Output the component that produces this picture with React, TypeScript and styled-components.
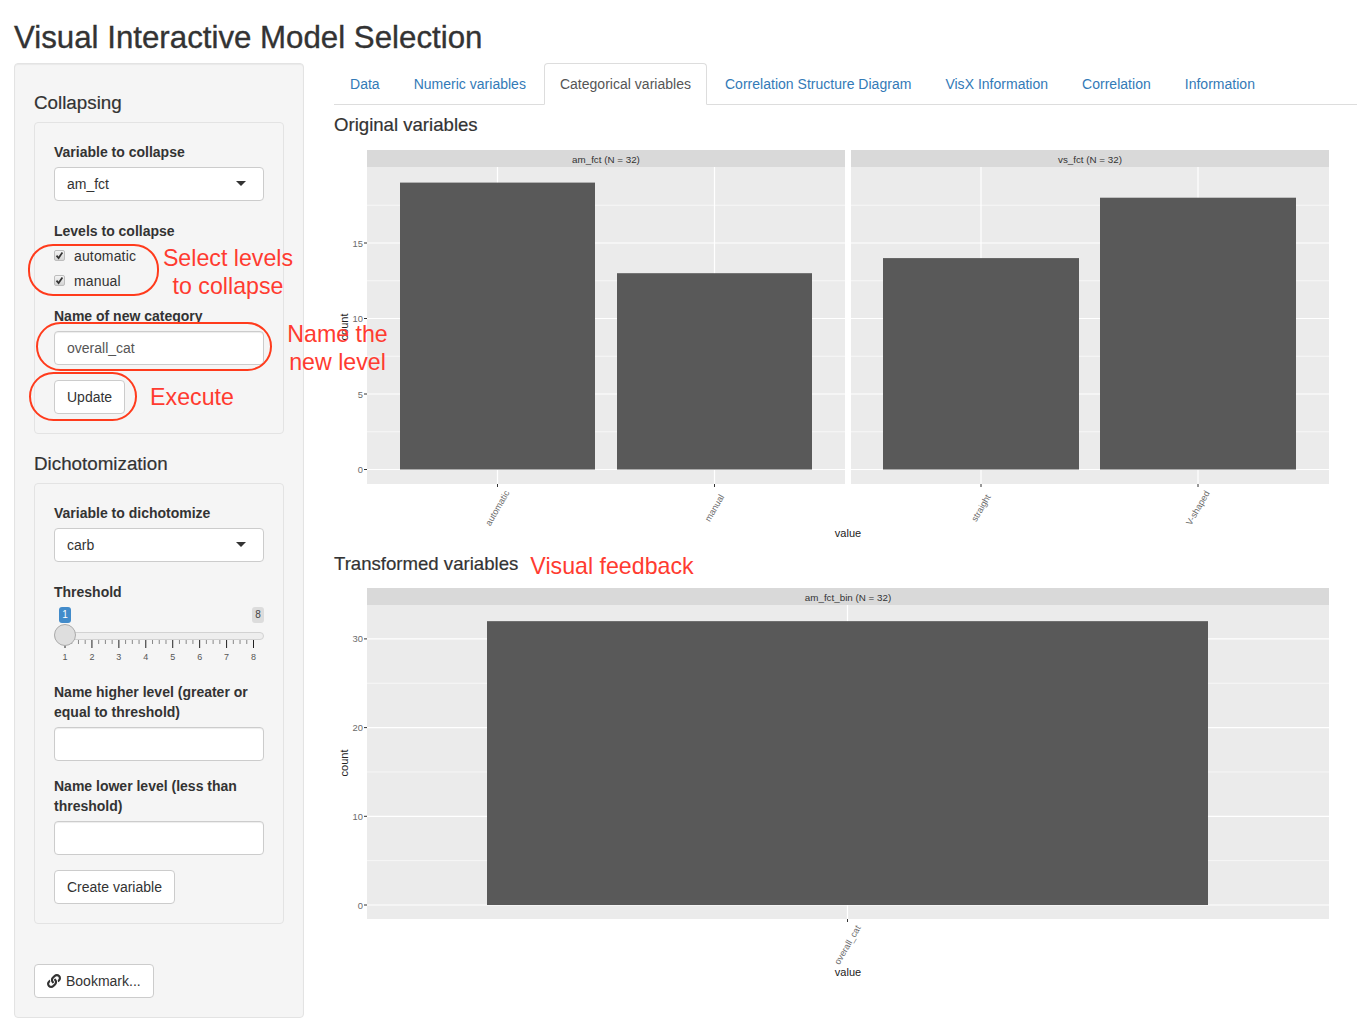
import styled, { createGlobalStyle } from "styled-components";
import { FaLink } from "react-icons/fa";

const GlobalStyle = createGlobalStyle`
  html, body {
    margin: 0;
    padding: 0;
    background: #fff;
  }
  body {
    font-family: "Liberation Sans", Arial, sans-serif;
    font-size: 14px;
    line-height: 20px;
    color: #333;
  }
  * {
    box-sizing: border-box;
  }
`;

const Page = styled.div`
  position: relative;
  height: 1019px;
  padding-left: 14px;
  overflow: hidden;
`;

const Title = styled.h2`
  margin: 21px 0 9px;
  font-size: 31.25px;
  font-weight: 500;
  line-height: 33px;
  -webkit-text-stroke: 0.35px #333;
`;

const Columns = styled.div`
  display: grid;
  grid-template-columns: 290px 1023px;
  column-gap: 30px;
`;

const Sidebar = styled.aside`
  height: 955px;
  padding: 19px;
  background: #f5f5f5;
  border: 1px solid #e3e3e3;
  border-radius: 4px;
  box-shadow: inset 0 1px 1px rgba(0, 0, 0, 0.05);
`;

const SectionTitle = styled.h3`
  margin: 10px 0 9px;
  font-size: 18.8px;
  font-weight: 500;
  line-height: 20px;
  -webkit-text-stroke: 0.2px #333;
`;

const Well = styled.div`
  margin-bottom: 20px;
  padding: 19px;
  background: #f5f5f5;
  border: 1px solid #e3e3e3;
  border-radius: 4px;
`;

const FormGroup = styled.div<{ $gap?: number; $top?: number }>`
  margin-bottom: ${(p) => p.$gap ?? 15}px;
  padding-top: ${(p) => p.$top ?? 0}px;
`;

const Label = styled.label<{ $flush?: boolean }>`
  display: block;
  margin-bottom: ${(p) => (p.$flush ? 2 : 5)}px;
  font-weight: 700;
`;

const SelectBox = styled.div`
  position: relative;
  height: 34px;
  padding: 6px 12px;
  background: #fff;
  border: 1px solid #ccc;
  border-radius: 4px;
  &::after {
    content: "";
    position: absolute;
    top: 13px;
    right: 17px;
    border-style: solid;
    border-width: 5px 5px 0;
    border-color: #333 transparent transparent;
  }
`;

const TextInput = styled.input`
  display: block;
  width: 100%;
  height: 34px;
  padding: 6px 12px;
  font: inherit;
  color: #555;
  background: #fff;
  border: 1px solid #ccc;
  border-radius: 4px;
  box-shadow: inset 0 1px 1px rgba(0, 0, 0, 0.075);
`;

const Button = styled.button`
  display: inline-flex;
  align-items: center;
  gap: 5px;
  height: 34px;
  padding: 6px 12px;
  font: inherit;
  color: #333;
  background: #fff;
  border: 1px solid #ccc;
  border-radius: 4px;
`;

const CheckRow = styled.div`
  display: flex;
  align-items: center;
  gap: 9px;
  height: 25px;
  letter-spacing: 0.15px;
`;

const CheckBox = styled.span`
  display: flex;
  align-items: center;
  justify-content: center;
  width: 11px;
  height: 11px;
  background: linear-gradient(#f4f4f4, #d4d4d4);
  border: 1px solid #bdbdbd;
  border-radius: 2px;
`;

const CheckMark = () => (
  <svg width="9" height="9" viewBox="0 0 9 9">
    <path d="M1.5 4.6 L3.6 7 L7.4 1.4" fill="none" stroke="#333" strokeWidth="1.7" />
  </svg>
);

const SliderWrap = styled.div`
  position: relative;
  height: 60px;
`;

const SliderBadge = styled.span<{ $active?: boolean }>`
  position: absolute;
  top: 0;
  ${(p) => (p.$active ? "left: 5px;" : "right: 0;")}
  width: 12px;
  height: 16px;
  font-size: 10px;
  line-height: 16px;
  text-align: center;
  color: ${(p) => (p.$active ? "#fff" : "#444")};
  background: ${(p) => (p.$active ? "#428bca" : "#dcdcdc")};
  border-radius: 3px;
`;

const SliderTrack = styled.div`
  position: absolute;
  top: 25px;
  left: 0;
  right: 0;
  height: 8px;
  background: #eee;
  border: 1px solid #d2d2d2;
  border-radius: 4px;
`;

const SliderHandle = styled.div`
  position: absolute;
  top: 17px;
  left: 0;
  width: 22px;
  height: 22px;
  background: #dedede;
  border: 1px solid #ababab;
  border-radius: 50%;
`;

const SliderScale = styled.svg`
  position: absolute;
  top: 33px;
  left: 0;
`;

const sliderX = (v: number) => 11 + (v - 1) * 26.93;

const Slider = () => {
  const major = [1, 2, 3, 4, 5, 6, 7, 8];
  const minor: number[] = [];
  major.slice(0, 7).forEach((v) => {
    [0.25, 0.5, 0.75].forEach((f) => minor.push(v + f));
  });
  return (
    <SliderWrap>
      <SliderBadge $active>1</SliderBadge>
      <SliderBadge>8</SliderBadge>
      <SliderTrack />
      <SliderScale width="210" height="27" viewBox="0 0 210 27">
        {minor.map((v) => (
          <line key={v} x1={sliderX(v)} x2={sliderX(v)} y1="0" y2="4" stroke="#888" />
        ))}
        {major.map((v) => (
          <g key={v}>
            <line x1={sliderX(v)} x2={sliderX(v)} y1="0" y2="8" stroke="#222" />
            <text x={sliderX(v)} y="20" fontSize="9" textAnchor="middle" fill="#555">
              {v}
            </text>
          </g>
        ))}
      </SliderScale>
      <SliderHandle />
    </SliderWrap>
  );
};

const Main = styled.main`
  min-width: 0;
`;

const TabList = styled.ul`
  display: flex;
  height: 42px;
  margin: 0;
  padding: 0;
  list-style: none;
  border-bottom: 1px solid #ddd;
`;

const Tab = styled.li<{ $active?: boolean }>`
  height: 42px;
  margin-right: 2px;
  padding: 10px 15px;
  border: 1px solid ${(p) => (p.$active ? "#ddd" : "transparent")};
  border-bottom-color: ${(p) => (p.$active ? "#fff" : "transparent")};
  border-radius: 4px 4px 0 0;
  color: ${(p) => (p.$active ? "#555" : "#337ab7")};
  background: ${(p) => (p.$active ? "#fff" : "transparent")};
  letter-spacing: 0.015px;
  white-space: nowrap;
`;

const PlotTitle = styled.h4<{ $top: number }>`
  margin: ${(p) => p.$top}px 0 6px;
  font-size: 18.6px;
  font-weight: 500;
  line-height: 20px;
  -webkit-text-stroke: 0.2px #333;
`;

const PlotSvg = styled.svg`
  display: block;
`;

const Ring = styled.div<{ $x: number; $y: number; $w: number; $h: number }>`
  position: absolute;
  left: ${(p) => p.$x}px;
  top: ${(p) => p.$y}px;
  width: ${(p) => p.$w}px;
  height: ${(p) => p.$h}px;
  border: 2px solid #ff3b1c;
  border-radius: 25px;
  pointer-events: none;
`;

const Note = styled.div<{ $x: number; $y: number; $w: number }>`
  position: absolute;
  left: ${(p) => p.$x}px;
  top: ${(p) => p.$y}px;
  width: ${(p) => p.$w}px;
  font-size: 23.2px;
  line-height: 28px;
  text-align: center;
  color: #ff3b30;
  white-space: nowrap;
`;

type PanelProps = {
  x: number;
  w: number;
  top: number;
  bottom: number;
  title: string;
  zero: number;
  unit: number;
  breaks: number[];
  showAxis: boolean;
  bars: { label: string; x0: number; x1: number; n: number }[];
  labelY: number;
};

const Panel = ({ x, w, top, bottom, title, zero, unit, breaks, showAxis, bars, labelY }: PanelProps) => {
  const stripBottom = top + 17;
  const step = breaks[1] - breaks[0];
  // half-step grid lines, dropped if they would land on the strip
  const minors = breaks.map((b) => b + step / 2).filter((b) => zero - b * unit > stripBottom);
  return (
    <g>
      <rect x={x} y={top} width={w} height="17" fill="#d9d9d9" />
      <rect x={x} y={stripBottom} width={w} height={bottom - stripBottom} fill="#ebebeb" />
      <text x={x + w / 2} y={top + 13} fontSize="9.8" textAnchor="middle" fill="#333">
        {title}
      </text>
      {minors.map((b) => (
        <line key={b} x1={x} x2={x + w} y1={zero - b * unit} y2={zero - b * unit} stroke="#fff" strokeWidth="0.6" />
      ))}
      {breaks.map((b) => (
        <line key={b} x1={x} x2={x + w} y1={zero - b * unit} y2={zero - b * unit} stroke="#fff" strokeWidth="1.2" />
      ))}
      {bars.map((b) => {
        const c = (b.x0 + b.x1) / 2;
        return (
          <g key={b.label}>
            <line x1={c} x2={c} y1={stripBottom} y2={bottom} stroke="#fff" strokeWidth="1.2" />
            <rect x={b.x0} y={zero - b.n * unit} width={b.x1 - b.x0} height={b.n * unit} fill="#595959" />
            <line x1={c} x2={c} y1={bottom} y2={bottom + 3} stroke="#333" />
            <text
              x={c}
              y={labelY}
              fontSize="9"
              textAnchor="middle"
              fill="#6a6a6a"
              transform={`rotate(-60 ${c} ${labelY - 3})`}
            >
              {b.label}
            </text>
          </g>
        );
      })}
      {showAxis &&
        breaks.map((b) => (
          <g key={b}>
            <line x1={x - 3} x2={x} y1={zero - b * unit} y2={zero - b * unit} stroke="#333" />
            <text x={x - 4} y={zero - b * unit + 3.5} fontSize="9.4" textAnchor="end" fill="#6a6a6a">
              {b}
            </text>
          </g>
        ))}
    </g>
  );
};

const AxisTitles = ({ countY, valueY }: { countY: number; valueY: number }) => (
  <>
    <text
      x="344"
      y={countY}
      fontSize="11"
      textAnchor="middle"
      fill="#222"
      transform={`rotate(-90 348 ${countY})`}
    >
      count
    </text>
    <text x="848" y={valueY} fontSize="11" textAnchor="middle" fill="#222">
      value
    </text>
  </>
);

const tabs = [
  "Data",
  "Numeric variables",
  "Categorical variables",
  "Correlation Structure Diagram",
  "VisX Information",
  "Correlation",
  "Information",
];

export default function App() {
  return (
    <Page>
      <GlobalStyle />
      <Title>Visual Interactive Model Selection</Title>
      <Columns>
        <Sidebar>
          <SectionTitle>Collapsing</SectionTitle>
          <Well>
            <FormGroup $gap={20}>
              <Label>Variable to collapse</Label>
              <SelectBox>am_fct</SelectBox>
            </FormGroup>
            <FormGroup $gap={13}>
              <Label $flush>Levels to collapse</Label>
              <CheckRow>
                <CheckBox>
                  <CheckMark />
                </CheckBox>
                automatic
              </CheckRow>
              <CheckRow>
                <CheckBox>
                  <CheckMark />
                </CheckBox>
                manual
              </CheckRow>
            </FormGroup>
            <FormGroup>
              <Label>Name of new category</Label>
              <TextInput defaultValue="overall_cat" />
            </FormGroup>
            <Button>Update</Button>
          </Well>

          <SectionTitle>Dichotomization</SectionTitle>
          <Well>
            <FormGroup $gap={20}>
              <Label>Variable to dichotomize</Label>
              <SelectBox>carb</SelectBox>
            </FormGroup>
            <FormGroup>
              <Label>Threshold</Label>
              <Slider />
            </FormGroup>
            <FormGroup>
              <Label>Name higher level (greater or equal to threshold)</Label>
              <TextInput />
            </FormGroup>
            <FormGroup>
              <Label>Name lower level (less than threshold)</Label>
              <TextInput />
            </FormGroup>
            <Button>Create variable</Button>
          </Well>

          <FormGroup $gap={0} $top={20}>
            <Button>
              <FaLink size={14} />
              Bookmark...
            </Button>
          </FormGroup>
        </Sidebar>

        <Main>
          <TabList>
            {tabs.map((t) => (
              <Tab key={t} $active={t === "Categorical variables"}>
                {t}
              </Tab>
            ))}
          </TabList>

          <PlotTitle $top={10}>Original variables</PlotTitle>
          <PlotSvg width="1023" height="402" viewBox="334 141 1023 402">
            <Panel
              x={367}
              w={478}
              top={150}
              bottom={484}
              title="am_fct (N = 32)"
              zero={469.5}
              unit={15.1}
              breaks={[0, 5, 10, 15]}
              showAxis
              labelY={511}
              bars={[
                { label: "automatic", x0: 400, x1: 595, n: 19 },
                { label: "manual", x0: 617, x1: 812, n: 13 },
              ]}
            />
            <Panel
              x={851}
              w={478}
              top={150}
              bottom={484}
              title="vs_fct (N = 32)"
              zero={469.5}
              unit={15.1}
              breaks={[0, 5, 10, 15]}
              showAxis={false}
              labelY={511}
              bars={[
                { label: "straight", x0: 883, x1: 1079, n: 14 },
                { label: "V-shaped", x0: 1100, x1: 1296, n: 18 },
              ]}
            />
            <AxisTitles countY={323} valueY={537} />
          </PlotSvg>

          <PlotTitle $top={11}>Transformed variables</PlotTitle>
          <PlotSvg width="1023" height="405" viewBox="334 580 1023 405">
            <Panel
              x={367}
              w={962}
              top={588}
              bottom={919}
              title="am_fct_bin (N = 32)"
              zero={905}
              unit={8.87}
              breaks={[0, 10, 20, 30]}
              showAxis
              labelY={948}
              bars={[{ label: "overall_cat", x0: 487, x1: 1208, n: 32 }]}
            />
            <AxisTitles countY={759} valueY={976} />
          </PlotSvg>
        </Main>
      </Columns>

      <Ring $x={28} $y={244} $w={131} $h={52} />
      <Ring $x={36} $y={322} $w={236} $h={49} />
      <Ring $x={29} $y={372} $w={108} $h={49} />

      <Note $x={148} $y={244} $w={160}>
        Select levels
        <br />
        to collapse
      </Note>
      <Note $x={268} $y={320} $w={139}>
        Name the
        <br />
        new level
      </Note>
      <Note $x={150} $y={383} $w={84}>
        Execute
      </Note>
      <Note $x={530} $y={552} $w={164}>
        Visual feedback
      </Note>
    </Page>
  );
}
